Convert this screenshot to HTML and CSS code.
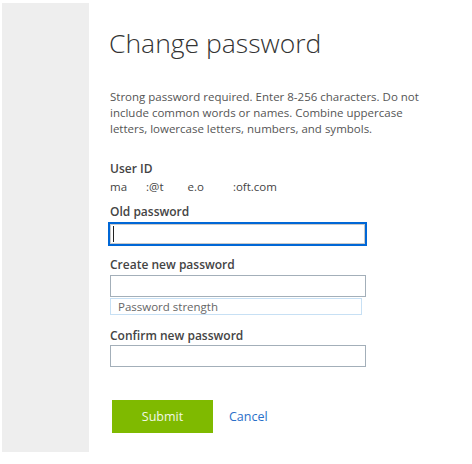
FILE: index.html
```html
<!DOCTYPE html>
<html>
<head>
<meta charset="utf-8">
<link rel="stylesheet" href="styles.css">
</head>
<body>
<div class="page">
  <div class="side"></div>
  <div class="main">
    <h1 class="title">Change password</h1>
    <p class="desc">Strong password required. Enter 8-256 characters. Do not include common words or names. Combine uppercase letters, lowercase letters, numbers, and symbols.</p>
    <div class="field first">
      <div class="label">User ID</div>
      <div class="value"><span>ma</span><span class="g1">:@t</span><span class="g2">e.o</span><span class="g3">:oft.com</span></div>
    </div>
    <div class="field">
      <div class="label">Old password</div>
      <div class="input focus"><span class="caret"></span></div>
    </div>
    <div class="field create">
      <div class="label">Create new password</div>
      <div class="input"></div>
      <div class="strength">Password strength</div>
    </div>
    <div class="field confirm">
      <div class="label">Confirm new password</div>
      <div class="input"></div>
    </div>
    <div class="actions">
      <button class="submit">Submit</button>
      <a class="cancel">Cancel</a>
    </div>
  </div>
</div>
</body>
</html>
```
FILE: styles.css
```css
html, body { margin: 0; padding: 0; background: #fff; }
body { font-family: "Open Sans", "Noto Sans", sans-serif; color: #333; }
.page { display: flex; align-items: flex-start; padding: 3px 0 0 2px; }
.side { width: 87px; height: 449px; background: #eeeeee; flex: none; }
.main { padding-left: 21px; width: 280px; }
.title { font-weight: 300; font-size: 26.5px; line-height: 32px; margin: 24px 0 0 -1px; color: #333; letter-spacing: 0; }
.desc { font-size: 11.5px; line-height: 16px; margin: 30px 0 0; color: #555; width: 320px; }
.field { margin-top: 9px; }
.field.first { margin-top: 24px; }
.field.create { margin-top: 11px; }
.field.confirm { margin-top: 13px; }
.label { font-size: 12px; font-weight: 600; line-height: 16px; color: #444; }
.value { font-size: 11.5px; line-height: 16px; color: #444; margin-top: 2px; white-space: nowrap; }
.value .g1 { margin-left: 19px; }
.value .g2 { margin-left: 24px; }
.value .g3 { margin-left: 29px; }
.input { width: 254px; height: 20px; border: 1px solid #a3afb9; margin-top: 2px; position: relative; }
.confirm .input { margin-top: 1px; }
.input.focus { width: 255px; height: 20px; border: 2px solid #0067d6; box-shadow: inset 0 0 0 1px #c8c8c8; margin-left: -2px; margin-top: 2px; }
.caret { position: absolute; left: 3px; top: 2px; width: 1px; height: 16px; background: #222; }
.strength { height: 15px; border: 1px solid #c7e0f4; margin-top: 1px; font-size: 11.5px; line-height: 15px; padding-left: 7px; color: #666; width: 243px; }
.actions { display: flex; align-items: center; margin-top: 33px; margin-left: 2px; }
.submit { width: 101px; height: 33px; background: #7fba00; border: 0; color: #f2f8e6; font-family: inherit; font-size: 12.5px; padding: 0; }
.cancel { margin-left: 16px; color: #2a6fc9; font-size: 12.5px; }
```
